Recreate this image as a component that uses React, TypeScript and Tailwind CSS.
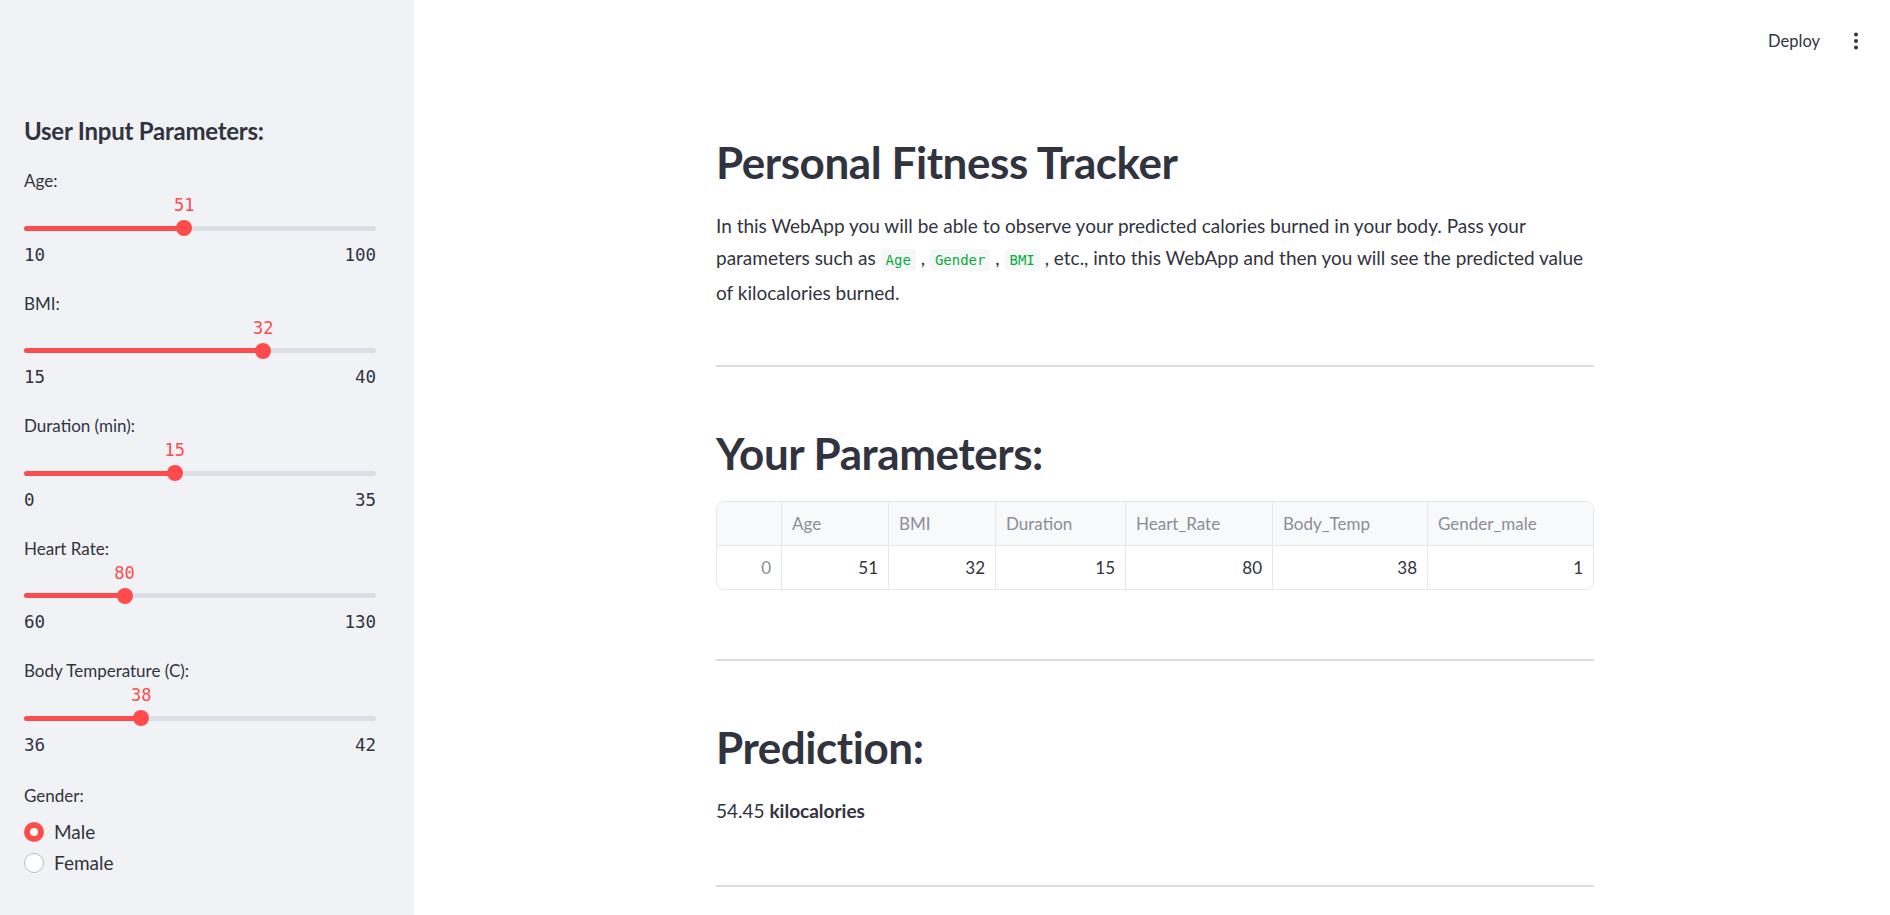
import React from 'react';

const sans = { fontFamily: 'Lato, "Noto Sans", sans-serif' };

type SliderProps = { label: string; value: number; min: number; max: number };

function Slider({ label, value, min, max }: SliderProps) {
    const pct = ((value - min) / (max - min)) * 100;
    return (
        <div className="flex flex-col">
            <div className="h-[24px] flex items-center text-[17px] text-[#31333f]">{label}</div>
            <div className="relative h-[26px]">
                <span
                    className="absolute top-0 h-[26px] flex items-center -translate-x-1/2 text-[17px] text-[#ff4b4b] font-['DejaVu_Sans_Mono',monospace]"
                    style={{ left: `${pct}%` }}
                >
                    {value}
                </span>
            </div>
            <div className="relative h-[18px] flex items-center">
                <div className="w-full h-[5px] rounded-full bg-[#dcdee6]" />
                <div className="absolute left-0 h-[5px] rounded-full bg-[#ff4b4b]" style={{ width: `${pct}%` }} />
                <div
                    className="absolute w-[16px] h-[16px] rounded-full bg-[#ff4b4b] -translate-x-1/2"
                    style={{ left: `${pct}%` }}
                />
            </div>
            <div className="h-[36px] flex items-center justify-between text-[17.5px] text-[#31333f] font-['DejaVu_Sans_Mono',monospace]">
                <span>{min}</span>
                <span>{max}</span>
            </div>
        </div>
    );
}

function Code({ children }: { children: React.ReactNode }) {
    return (
        <code className="px-[5px] py-[3px] rounded-[4px] bg-[#f6f7f9] text-[#09ab3b] text-[14px] font-['DejaVu_Sans_Mono',monospace]">
            {children}
        </code>
    );
}

export default function App() {
    const sliders: SliderProps[] = [
        { label: 'Age:', value: 51, min: 10, max: 100 },
        { label: 'BMI:', value: 32, min: 15, max: 40 },
        { label: 'Duration (min):', value: 15, min: 0, max: 35 },
        { label: 'Heart Rate:', value: 80, min: 60, max: 130 },
        { label: 'Body Temperature (C):', value: 38, min: 36, max: 42 },
    ];

    const cols = [
        { name: '', w: 'w-[64px]' },
        { name: 'Age', w: 'w-[107px]' },
        { name: 'BMI', w: 'w-[107px]' },
        { name: 'Duration', w: 'w-[130px]' },
        { name: 'Heart_Rate', w: 'w-[147px]' },
        { name: 'Body_Temp', w: 'w-[155px]' },
        { name: 'Gender_male', w: 'flex-1' },
    ];
    const row = ['0', '51', '32', '15', '80', '38', '1'];

    return (
        <div className="flex w-full h-[915px] overflow-hidden bg-white text-[#31333f]" style={sans}>
            {/* Sidebar */}
            <aside className="w-[414px] shrink-0 h-full bg-[#f0f2f6] pl-[24px] pr-[38px] pt-[116px]">
                <h2 className="h-[30px] flex items-center text-[24px] font-bold tracking-[-0.01em] text-[#31333f]">
                    User Input Parameters:
                </h2>
                <div className="mt-[23px] flex flex-col gap-[18.5px]">
                    {sliders.map((s) => (
                        <Slider key={s.label} {...s} />
                    ))}
                </div>
                <div className="mt-[21px] h-[24px] flex items-center text-[17px]">Gender:</div>
                <div className="mt-[9px] flex flex-col gap-[1px]">
                    <label className="h-[30px] flex items-center gap-[10px] text-[19px]">
                        <span className="w-[20px] h-[20px] rounded-full bg-[#ff4b4b] flex items-center justify-center">
                            <span className="w-[8px] h-[8px] rounded-full bg-white" />
                        </span>
                        Male
                    </label>
                    <label className="h-[30px] flex items-center gap-[10px] text-[19px]">
                        <span className="w-[20px] h-[20px] rounded-full bg-white border border-[#b9bcc6]" />
                        Female
                    </label>
                </div>
            </aside>

            {/* Main */}
            <main className="flex-1 flex flex-col pl-[6px]">
                <header className="h-[82px] flex items-center justify-end pr-[24px] gap-[26px]">
                    <span className="text-[16.5px] text-[#31333f]">Deploy</span>
                    <svg width="20" height="20" viewBox="0 0 20 20" fill="#31333f">
                        <circle cx="10" cy="3.5" r="2" />
                        <circle cx="10" cy="10" r="2" />
                        <circle cx="10" cy="16.5" r="2" />
                    </svg>
                </header>

                <div className="mx-auto w-[878px] pt-[54px]">
                    <h1 className="text-[44px] leading-[1.2] font-bold tracking-[-0.01em]">Personal Fitness Tracker</h1>
                    <p className="mt-[21px] text-[19px] leading-[32.5px]">
                        In this WebApp you will be able to observe your predicted calories burned in your body. Pass your
                        parameters such as <Code>Age</Code> , <Code>Gender</Code> , <Code>BMI</Code> , etc., into this
                        WebApp and then you will see the predicted value of kilocalories burned.
                    </p>
                    <hr className="mt-[56px] border-0 h-[2px] bg-[#dcdcdf]" />

                    <h2 className="mt-[60px] text-[44px] leading-[1.2] font-bold tracking-[-0.01em]">Your Parameters:</h2>
                    <div className="mt-[21px] border border-[#e6e7ea] rounded-[8px] overflow-hidden text-[17px]">
                        <div className="flex h-[44px] bg-[#f8f9fb] border-b border-[#e6e7ea]">
                            {cols.map((c, i) => (
                                <div
                                    key={i}
                                    className={`${c.w} flex items-center px-[10px] text-[#8b8d98] ${i > 0 ? 'border-l border-[#e6e7ea]' : ''}`}
                                >
                                    {c.name}
                                </div>
                            ))}
                        </div>
                        <div className="flex h-[43px]">
                            {cols.map((c, i) => (
                                <div
                                    key={i}
                                    className={`${c.w} flex items-center justify-end px-[10px] ${i > 0 ? 'border-l border-[#e6e7ea] text-[#31333f]' : 'text-[#8b8d98]'}`}
                                >
                                    {row[i]}
                                </div>
                            ))}
                        </div>
                    </div>
                    <hr className="mt-[69px] border-0 h-[2px] bg-[#dcdcdf]" />

                    <h2 className="mt-[60px] text-[44px] leading-[1.2] font-bold tracking-[-0.01em]">Prediction:</h2>
                    <p className="mt-[21px] text-[19px] leading-[32px]">
                        54.45 <span className="font-bold">kilocalories</span>
                    </p>
                    <hr className="mt-[58px] border-0 h-[2px] bg-[#dcdcdf]" />
                </div>
            </main>
        </div>
    );
}
